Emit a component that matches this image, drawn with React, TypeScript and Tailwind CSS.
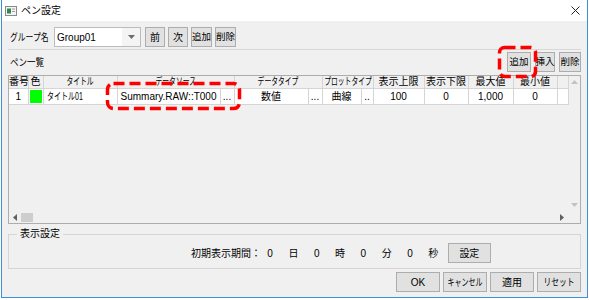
import React from "react";

function Btn({ children, className = "" }: { children: React.ReactNode; className?: string }) {
  return (
    <div
      className={`flex h-[20px] items-center justify-center whitespace-nowrap border border-[#adadad] bg-[#e1e1e1] ${className}`}
    >
      {children}
    </div>
  );
}

function Tri({ dir, color = "#606060" }: { dir: "up" | "down" | "left" | "right"; color?: string }) {
  const pts = {
    up: "0,4 3.5,0 7,4",
    down: "0,0 7,0 3.5,4",
    left: "4,0 4,7 0,3.5",
    right: "0,0 0,7 4,3.5",
  }[dir];
  const vert = dir === "up" || dir === "down";
  return (
    <svg width={vert ? 7 : 4} height={vert ? 4 : 7} viewBox={vert ? "0 0 7 4" : "0 0 4 7"}>
      <polygon points={pts} fill={color} />
    </svg>
  );
}

// kana in the original UI font are much narrower than in Noto CJK, so squeeze them
function Narrow({ children, className }: { children: React.ReactNode; className: string }) {
  return <span className={`inline-block shrink-0 whitespace-nowrap ${className}`}>{children}</span>;
}

function HeadKana({ children }: { children: React.ReactNode }) {
  return (
    <div className="flex justify-center">
      <Narrow className="scale-x-[0.68]">{children}</Narrow>
    </div>
  );
}

const th = "h-[12px] border-r border-b border-[#d5d5d5] bg-[#f0f0f0] p-0 text-center font-normal leading-[12px] whitespace-nowrap overflow-hidden";
const td = "h-[15px] border-r border-b border-[#d5d5d5] bg-white p-0 text-center leading-[14px] whitespace-nowrap overflow-hidden";

export default function App() {
  return (
    <div className="relative h-[300px] w-[589px] bg-white text-[10px] text-black font-['Liberation_Sans','Noto_Sans_CJK_JP',sans-serif]">
      <div className="ml-[1px] flex h-[298px] w-[587px] flex-col border-x border-b border-[#3f8ddb]">
        {/* title bar */}
        <div className="flex h-[21px] items-center bg-white pl-[3px] pr-[7px]">
          <svg width="12" height="10" viewBox="0 0 12 10">
            <rect x="0.5" y="0.5" width="11" height="9" fill="#f4f4f4" stroke="#8a8a8a" />
            <rect x="2" y="2.5" width="4" height="5" fill="#2f8a4a" />
            <rect x="7" y="2.5" width="3" height="1" fill="#9a9a9a" />
            <rect x="7" y="5" width="3" height="1" fill="#9a9a9a" />
          </svg>
          <span className="ml-[4px]">ペン設定</span>
          <svg className="ml-auto" width="9" height="9" viewBox="0 0 9 9">
            <path d="M0.5 0.5 L8.5 8.5 M8.5 0.5 L0.5 8.5" stroke="#222" strokeWidth="1" />
          </svg>
        </div>

        {/* body */}
        <div className="flex flex-1 flex-col bg-[#f0f0f0] px-[6px] pt-[6px]">
          {/* group row */}
          <div className="flex h-[20px] items-center">
            <div className="ml-[2px] flex w-[44px] shrink-0">
              <Narrow className="origin-left scale-x-[0.78]">グループ名</Narrow>
            </div>
            <div className="flex h-[20px] w-[87px] shrink-0 items-center border border-[#bcbcbc] bg-white">
              <span className="flex-1 pl-[2px]">Group01</span>
              <div className="flex h-full w-[18px] items-center justify-center bg-[#f4f4f4]">
                <Tri dir="down" color="#6d6d6d" />
              </div>
            </div>
            <div className="ml-[4px] flex gap-[3px]">
              <Btn className="w-[20px]">前</Btn>
              <Btn className="w-[20px]">次</Btn>
              <Btn className="w-[21px] text-[9.5px]">追加</Btn>
              <Btn className="w-[21px] text-[9.5px]">削除</Btn>
            </div>
          </div>

          <div className="mt-[2px] h-px bg-[#d7d7d7]" />

          {/* pen list header */}
          <div className="mt-[2px] flex h-[20px] items-center">
            <div className="ml-[2px] flex">
              <Narrow className="origin-left scale-x-[0.85]">ペン一覧</Narrow>
            </div>
            <div className="ml-auto flex gap-[4px]">
              <Btn className="w-[24px] text-[9.5px]">追加</Btn>
              <Btn className="w-[20px] text-[9.5px]">挿入</Btn>
              <Btn className="w-[22px] text-[9.5px]">削除</Btn>
            </div>
          </div>

          {/* table */}
          <div className="mt-[3px] flex h-[149px] border border-[#adadad] bg-[#f0f0f0]">
            <div className="flex w-[559px] flex-col">
              <table className="w-[559px] table-fixed border-collapse">
                <colgroup>
                  <col className="w-[19px]" />
                  <col className="w-[15px]" />
                  <col className="w-[74px]" />
                  <col className="w-[103px]" />
                  <col className="w-[14px]" />
                  <col className="w-[74px]" />
                  <col className="w-[14px]" />
                  <col className="w-[39px]" />
                  <col className="w-[12px]" />
                  <col className="w-[51px]" />
                  <col className="w-[44px]" />
                  <col className="w-[45px]" />
                  <col className="w-[44px]" />
                  <col className="w-[11px]" />
                </colgroup>
                <thead>
                  <tr>
                    <th className={th}>番号</th>
                    <th className={th}>色</th>
                    <th className={th}>
                      <HeadKana>タイトル</HeadKana>
                    </th>
                    <th className={th} colSpan={2}>
                      <HeadKana>データソース</HeadKana>
                    </th>
                    <th className={th} colSpan={2}>
                      <HeadKana>データタイプ</HeadKana>
                    </th>
                    <th className={th} colSpan={2}>
                      <HeadKana>プロットタイプ</HeadKana>
                    </th>
                    <th className={th}>表示上限</th>
                    <th className={th}>表示下限</th>
                    <th className={th}>最大値</th>
                    <th className={th}>最小値</th>
                    <th className={th}></th>
                  </tr>
                </thead>
                <tbody>
                  <tr>
                    <td className={td}>1</td>
                    <td className={`${td} px-[1px] py-[1px]`}>
                      <div className="h-[13px] bg-[#00ff00]" />
                    </td>
                    <td className={`${td} pl-[3px] text-left`}>
                      <Narrow className="origin-left scale-x-[0.7]">タイトル01</Narrow>
                    </td>
                    <td className={`${td} bg-[#bed2f0] pl-[3px] text-left`}>Summary.RAW::T000</td>
                    <td className={`${td} bg-[#f0f0f0]`}>...</td>
                    <td className={td}>数値</td>
                    <td className={`${td} bg-[#f0f0f0]`}>...</td>
                    <td className={td}>曲線</td>
                    <td className={`${td} bg-[#f0f0f0]`}>..</td>
                    <td className={td}>100</td>
                    <td className={td}>0</td>
                    <td className={td}>1,000</td>
                    <td className={td}>0</td>
                    <td className={td}></td>
                  </tr>
                </tbody>
              </table>
              <div className="flex-1" />
              {/* horizontal scrollbar */}
              <div className="flex h-[12px] items-center">
                <div className="flex w-[12px] justify-center">
                  <Tri dir="left" />
                </div>
                <div className="h-[9px] w-[12px] bg-[#cdcdcd]" />
                <div className="flex-1" />
                <div className="flex w-[12px] justify-center">
                  <Tri dir="right" />
                </div>
              </div>
            </div>
            {/* vertical scrollbar */}
            <div className="flex w-[12px] flex-col">
              <div className="flex h-[12px] items-center justify-center">
                <Tri dir="up" color="#c2c2c2" />
              </div>
              <div className="flex-1" />
              <div className="flex h-[12px] items-center justify-center">
                <Tri dir="down" color="#c2c2c2" />
              </div>
              <div className="h-[12px]" />
            </div>
          </div>

          {/* display settings */}
          <fieldset className="mt-[3px] border border-[#d5d5d5] px-0 pt-[2px] pb-[5px]">
            <legend className="ml-[8px] px-[3px] leading-[14px]">表示設定</legend>
            <div className="flex h-[20px] items-center pl-[182px]">
              <span className="w-[67.5px] whitespace-nowrap">初期表示期間：</span>
              <span className="w-[23.3px] text-center">0</span>
              <span className="w-[23.3px] text-center">日</span>
              <span className="w-[23.3px] text-center">0</span>
              <span className="w-[23.3px] text-center">時</span>
              <span className="w-[23.3px] text-center">0</span>
              <span className="w-[23.3px] text-center">分</span>
              <span className="w-[23.3px] text-center">0</span>
              <span className="w-[23.3px] text-center">秒</span>
              <Btn className="ml-[3px] w-[43px]">設定</Btn>
            </div>
          </fieldset>

          {/* dialog buttons */}
          <div className="mt-[3px] flex justify-end gap-[3px]">
            <Btn className="w-[44px]">OK</Btn>
            <Btn className="w-[44px]">
              <Narrow className="scale-x-[0.7]">キャンセル</Narrow>
            </Btn>
            <Btn className="w-[44px]">適用</Btn>
            <Btn className="w-[44px]">
              <Narrow className="scale-x-[0.78]">リセット</Narrow>
            </Btn>
          </div>
        </div>
      </div>

      {/* red annotation boxes */}
      <svg className="pointer-events-none absolute left-0 top-0" width="589" height="300">
        <rect x="107.5" y="83.5" width="132" height="25" rx="6" fill="none" stroke="#ff0000" strokeWidth="3.5" strokeDasharray="11 5" />
        <rect x="499.5" y="47.5" width="36" height="29" rx="5" fill="none" stroke="#ff0000" strokeWidth="3.5" strokeDasharray="11 5" />
      </svg>
    </div>
  );
}
